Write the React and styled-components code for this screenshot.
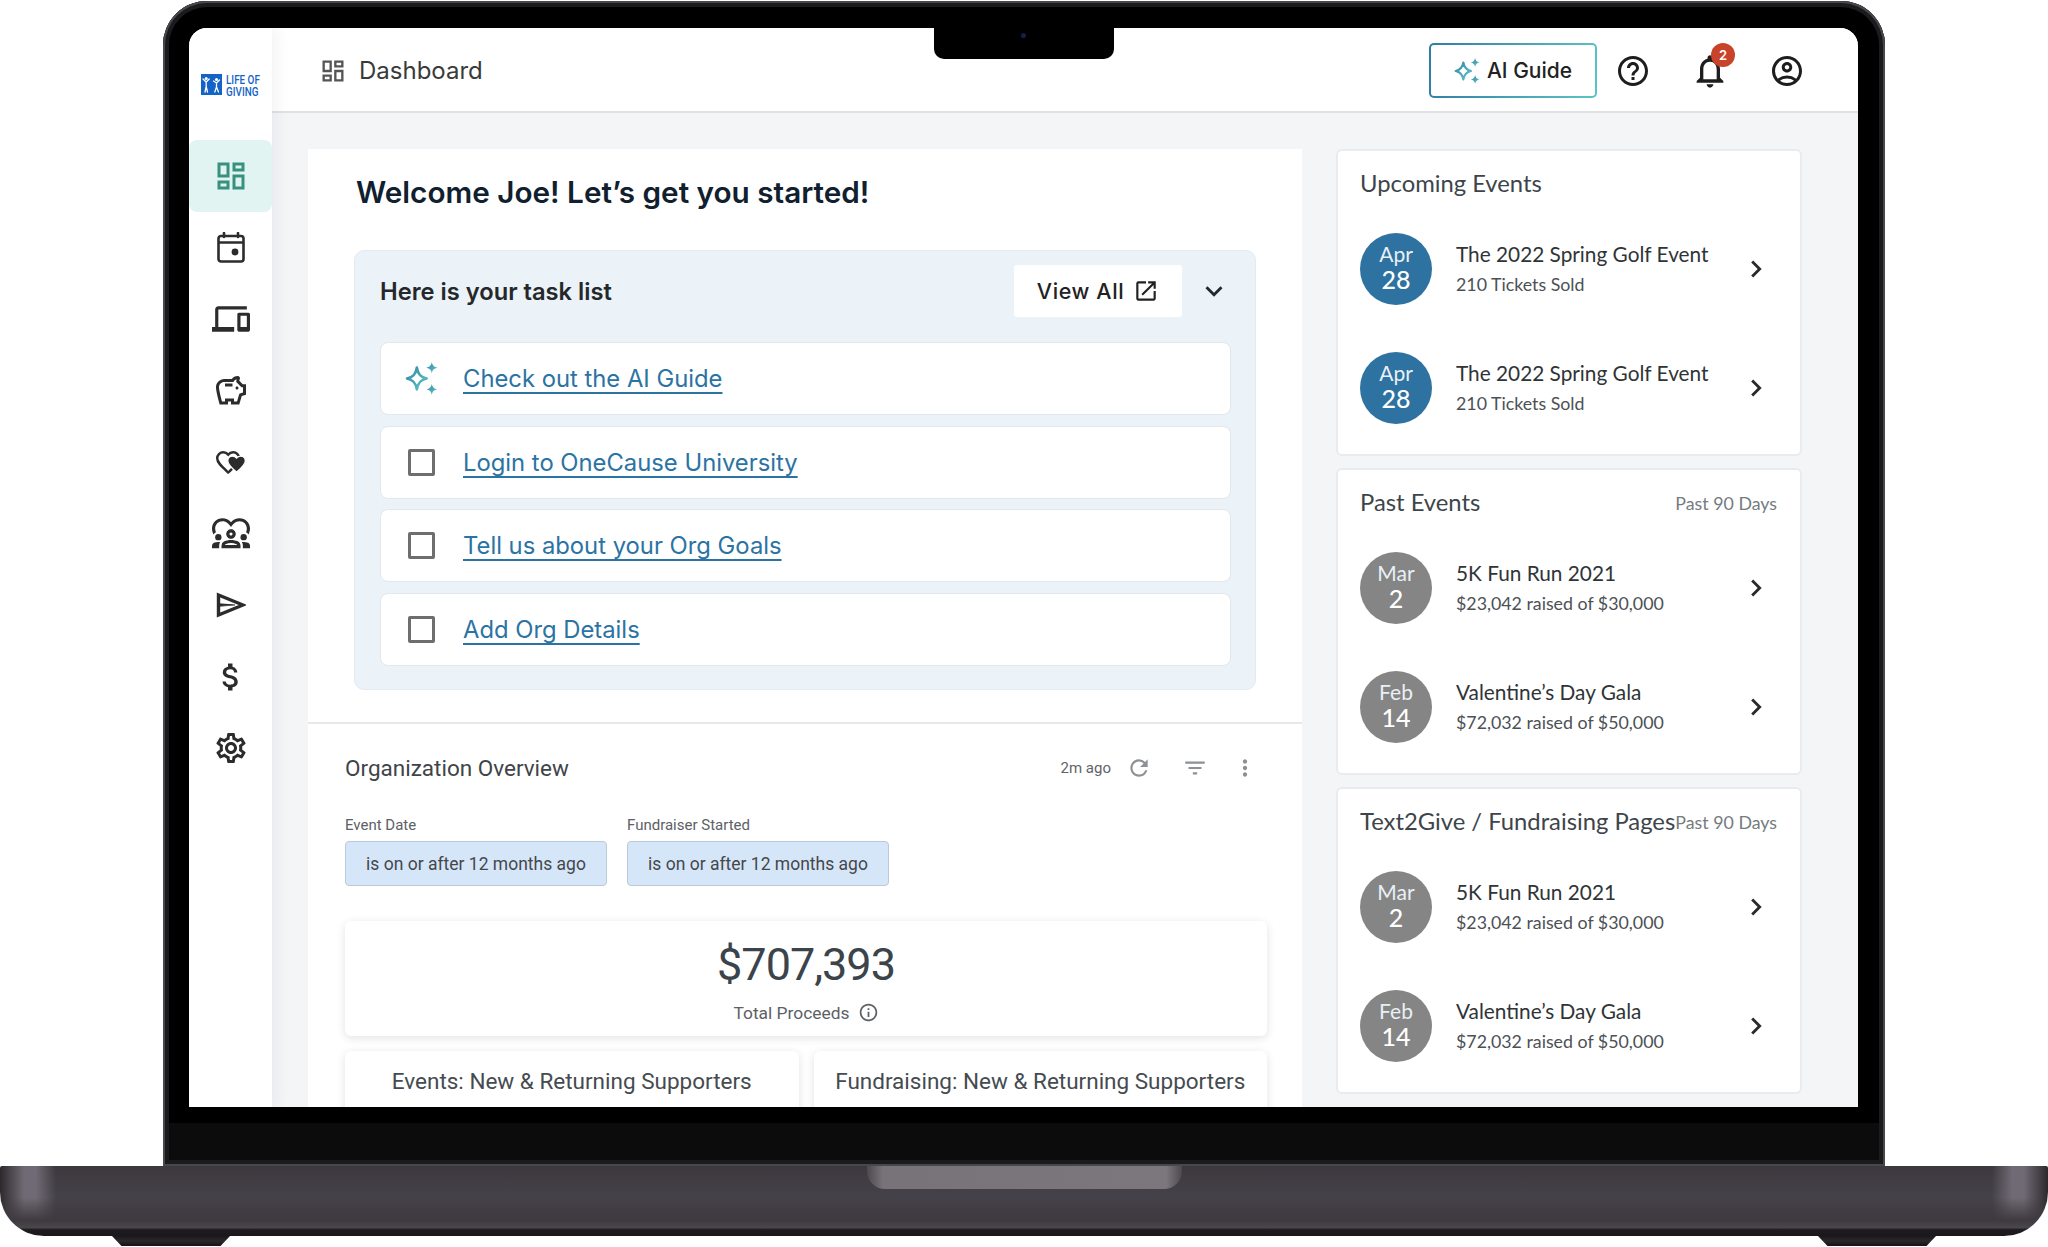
import React from 'react'
import styled, { createGlobalStyle } from 'styled-components'
import {
  MdOutlineDashboard,
  MdOutlineDevices,
  MdOutlineSavings,
  MdOutlineDiversity1,
  MdAttachMoney,
  MdOutlineSettings,
  MdHelpOutline,
  MdOutlineNotifications,
  MdOutlineAccountCircle,
  MdFilterList,
  MdMoreVert,
  MdRefresh,
  MdInfoOutline,
  MdOpenInNew,
  MdChevronRight,
  MdKeyboardArrowDown,
} from 'react-icons/md'

const GlobalStyle = createGlobalStyle`
  html, body {
    margin: 0;
    padding: 0;
    background: #fff;
    font-family: "Inter", "Liberation Sans", sans-serif;
  }
  * { box-sizing: border-box; }
`

const Page = styled.div`
  width: 2048px;
  height: 1247px;
  overflow: hidden;
  padding-top: 1px;
  display: flex;
  flex-direction: column;
  align-items: center;
  background: #fff;
`

const Lid = styled.div`
  width: 1722px;
  height: 1165px;
  padding: 27px 27px 59px 26px;
  border-radius: 44px 44px 0 0;
  background: linear-gradient(to bottom, #000 0, #000 1122px, #0c0c0c 1122px, #0c0c0c 100%);
  box-shadow: inset 0 0 0 2px #47474c, inset 0 0 0 6px #1b1b1e;
`

const Screen = styled.div`
  position: relative;
  width: 1669px;
  height: 1079px;
  overflow: hidden;
  display: flex;
  border-radius: 18px 18px 0 0;
  background: #f3f5f7;
`

const Notch = styled.div`
  position: absolute;
  top: 0;
  left: 50%;
  z-index: 3;
  width: 180px;
  height: 31px;
  margin-left: -90px;
  border-radius: 0 0 10px 10px;
  background: #000;
  display: flex;
  justify-content: center;
  padding-top: 5px;
`

const Camera = styled.div`
  width: 5px;
  height: 5px;
  border-radius: 50%;
  background: #15204a;
`

const Base = styled.div`
  width: 2048px;
  height: 70px;
  flex: none;
  display: flex;
  justify-content: center;
  border-radius: 2px 2px 44px 44px;
  background:
    linear-gradient(to bottom, rgba(62, 58, 64, 0) 45%, #3e3a40 78%, #4a464c 88%, #1e1c20 91%, #1a181c 100%),
    linear-gradient(to right, #2c292d 0, #6f6a73 24px, #6f6a73 36px, rgba(70, 65, 72, 0) 56px, rgba(70, 65, 72, 0) 1992px, #6f6a73 2012px, #6f6a73 2024px, #2c292d 2048px),
    linear-gradient(to bottom, #3c383e 0, #46424a 45%, #3e3a40 100%);
`

const Thumb = styled.div`
  width: 315px;
  height: 23px;
  border-radius: 0 0 18px 18px;
  background: linear-gradient(to right, #4d494f 0, #787379 5%, #7c777d 95%, #4d494f 100%);
`

const Feet = styled.div`
  width: 2048px;
  height: 10px;
  flex: none;
  display: flex;
  justify-content: space-between;
  padding: 0 112px;
`

const Foot = styled.div`
  width: 118px;
  height: 10px;
  background: linear-gradient(to bottom, #1a181b, #2a282b 50%, #141315);
  clip-path: polygon(0 0, 100% 0, 92% 100%, 8% 100%);
`

const Sidebar = styled.aside`
  position: relative;
  z-index: 1;
  width: 83px;
  flex: none;
  background: #fff;
  box-shadow: 4px 0 14px rgba(30, 40, 60, 0.06);
`

const LogoWrap = styled.div`
  height: 112px;
  padding: 46px 0 0 12px;
  display: flex;
  align-items: flex-start;
  gap: 4px;
`

const LogoText = styled.div`
  color: #1463c7;
  font-family: "Roboto", "Liberation Sans", sans-serif;
  font-weight: 500;
  font-size: 13px;
  line-height: 11.5px;
  transform: scaleX(0.76);
  transform-origin: left top;
  white-space: nowrap;
`

const NavItem = styled.div`
  height: ${(p) => (p.$active ? '72px' : '71.5px')};
  display: flex;
  align-items: center;
  justify-content: center;
  border-radius: ${(p) => (p.$active ? '8px' : '0')};
  background: ${(p) => (p.$active ? '#e1f4f1' : 'transparent')};
  color: ${(p) => (p.$active ? '#38917f' : '#2c2c2c')};
`

const Content = styled.div`
  flex: 1;
  min-width: 0;
  display: flex;
  flex-direction: column;
`

const Header = styled.header`
  height: 85px;
  flex: none;
  display: flex;
  align-items: center;
  justify-content: space-between;
  padding: 2px 53px 0 47px;
  background: #fff;
  border-bottom: 2px solid #dfe1e4;
`

const PageTitle = styled.div`
  display: flex;
  align-items: center;
  gap: 12px;
  color: #3a3a3a;
  font-size: 24px;
  line-height: 30px;
`

const TopActions = styled.div`
  display: flex;
  align-items: center;
`

const GuideButton = styled.button`
  width: 168px;
  height: 55px;
  margin-right: 18px;
  display: flex;
  align-items: center;
  justify-content: center;
  gap: 7px;
  border: 2px solid transparent;
  border-radius: 5px;
  background:
    linear-gradient(#fff, #fff) padding-box,
    linear-gradient(100deg, #2f7ea5, #5cc4c4) border-box;
  color: #222;
  font-family: "Inter", sans-serif;
  font-size: 21px;
  font-weight: 500;
`

const TopIcon = styled.div`
  position: relative;
  width: 36px;
  height: 36px;
  margin-left: ${(p) => (p.$gap ? `${p.$gap}px` : '0')};
  color: #1e1e1e;
  display: flex;
  align-items: center;
  justify-content: center;
  svg { flex: none; }
`

const Badge = styled.span`
  position: absolute;
  top: -10px;
  right: -7px;
  width: 24px;
  height: 24px;
  border-radius: 50%;
  background: #c8432a;
  color: #fff;
  font-size: 13px;
  font-weight: 600;
  display: flex;
  align-items: center;
  justify-content: center;
`

const Main = styled.main`
  flex: 1;
  min-height: 0;
  display: flex;
  gap: 34px;
  padding: 36px 56px 0 36px;
`

const LeftCard = styled.section`
  width: 994px;
  flex: none;
  background: #fff;
`

const StartBlock = styled.div`
  padding: 0 46px 32px;
  border-bottom: 2px solid #e8e8e8;
`

const Welcome = styled.h1`
  margin: 0;
  height: 101px;
  padding: 23px 0 0 2px;
  color: #10202e;
  font-size: 29.7px;
  line-height: 40px;
  font-weight: 600;
`

const TaskPanel = styled.div`
  height: 440px;
  padding: 14px 24px 0 25px;
  border-radius: 10px;
  border: 1px solid #e4eaf1;
  background: #ebf2f8;
`

const TaskHead = styled.div`
  height: 52px;
  margin-bottom: 25px;
  display: flex;
  align-items: center;
  color: #25282b;
`

const TaskTitle = styled.div`
  flex: 1;
  font-size: 23.7px;
  font-weight: 600;
`

const ViewAll = styled.button`
  width: 168px;
  height: 52px;
  display: flex;
  align-items: center;
  justify-content: center;
  gap: 9px;
  border: none;
  border-radius: 3px;
  background: #fff;
  color: #222;
  font-family: "Inter", sans-serif;
  font-size: 21.5px;
  font-weight: 500;
  letter-spacing: 0.6px;
`

const Collapse = styled.div`
  width: 49px;
  padding-left: 15px;
  display: flex;
`

const TaskList = styled.div`
  display: flex;
  flex-direction: column;
  gap: 10.7px;
`

const TaskRow = styled.div`
  height: 73px;
  padding-left: 27px;
  display: flex;
  align-items: center;
  gap: 28px;
  border-radius: 8px;
  border: 1px solid #e3e7ec;
  background: #fff;
`

const IconSlot = styled.div`
  width: 27px;
  flex: none;
  display: flex;
  justify-content: center;
`

const Checkbox = styled.span`
  display: block;
  width: 27px;
  height: 27px;
  border: 3px solid #6e6e6e;
  border-radius: 2px;
`

const TaskLink = styled.a`
  color: #2b73a3;
  font-size: 23.8px;
  text-decoration: underline;
  text-decoration-thickness: 2px;
  text-underline-offset: 5px;
  text-decoration-skip-ink: none;
`

const Overview = styled.div`
  padding: 0 35px 0 37px;
  font-family: "Roboto", "Liberation Sans", sans-serif;
`

const OverviewHead = styled.div`
  height: 88px;
  display: flex;
  align-items: center;
  justify-content: space-between;
`

const OverviewTitle = styled.div`
  color: #3f4448;
  font-size: 22.5px;
`

const OverviewTools = styled.div`
  display: flex;
  align-items: center;
  gap: 14px;
  padding-right: 9px;
  color: #8d9195;
`

const Ago = styled.span`
  color: #5f6468;
  font-size: 15px;
  margin-right: 1px;
`

const ToolIcon = styled.span`
  width: 26px;
  height: 26px;
  margin-left: ${(p) => (p.$gap ? `${p.$gap}px` : '0')};
  display: flex;
`

const Filters = styled.div`
  display: flex;
  gap: 20px;
  margin-bottom: 35px;
`

const Filter = styled.div`
  display: flex;
  flex-direction: column;
  gap: 6px;
  padding-top: 3px;
`

const FilterLabel = styled.label`
  color: #5c6166;
  font-size: 15px;
  line-height: 20px;
  height: 20px;
`

const Chip = styled.div`
  width: 262px;
  height: 45px;
  display: flex;
  align-items: center;
  justify-content: center;
  border-radius: 4px;
  border: 1px solid #bcc9d8;
  background: #d6e6f9;
  color: #44484c;
  font-size: 17.5px;
`

const Tile = styled.div`
  border-radius: 6px;
  background: #fff;
  box-shadow: 0 2px 9px rgba(40, 50, 60, 0.14);
`

const TotalTile = styled(Tile)`
  height: 115px;
  margin-bottom: 15px;
  padding-top: 14px;
  text-align: center;
`

const Amount = styled.div`
  color: #3b444b;
  font-size: 45px;
  letter-spacing: -1px;
  line-height: 60px;
`

const AmountLabel = styled.div`
  margin-top: 7px;
  display: flex;
  align-items: center;
  justify-content: center;
  gap: 8px;
  color: #5c6166;
  font-size: 17.4px;
`

const TileRow = styled.div`
  display: grid;
  grid-template-columns: 1fr 1fr;
  gap: 15px;
`

const HalfTile = styled(Tile)`
  height: 110px;
  padding-top: 16px;
  text-align: center;
  color: #454b50;
  font-size: 22.5px;
  line-height: 28px;
`

const RightColumn = styled.section`
  width: 466px;
  flex: none;
  display: flex;
  flex-direction: column;
  gap: 12px;
  font-family: "Lato", "Liberation Sans", sans-serif;
`

const EventCard = styled.div`
  height: 307px;
  flex: none;
  border: 2px solid #e9ebee;
  border-radius: 6px;
  background: #fff;
`

const EventHead = styled.div`
  height: 58px;
  padding: 16px 23px 0 22px;
  display: flex;
  justify-content: space-between;
  white-space: nowrap;
`

const EventHeading = styled.h2`
  margin: 0;
  color: #3d454b;
  font-size: 23.8px;
  line-height: 32px;
  font-weight: 400;
`

const Period = styled.span`
  color: #757b80;
  font-size: 17.8px;
  line-height: 34px;
`

const EventRow = styled.div`
  height: 119px;
  padding: 0 27px 0 22px;
  display: flex;
  align-items: center;
  gap: 24px;
`

const DateBadge = styled.div`
  width: 72px;
  height: 72px;
  flex: none;
  padding-top: 8px;
  border-radius: 50%;
  background: ${(p) => (p.$past ? '#858585' : '#2e72a1')};
  color: #fff;
  text-align: center;
`

const Month = styled.div`
  font-size: 21px;
  line-height: 26px;
  color: #e8f0f5;
`

const Day = styled.div`
  font-size: 25px;
  line-height: 24px;
  font-weight: 500;
`

const EventInfo = styled.div`
  flex: 1;
  min-width: 0;
  white-space: nowrap;
`

const EventName = styled.div`
  color: #2f3437;
  font-size: 20.8px;
  line-height: 30px;
`

const EventSub = styled.div`
  color: #4c5155;
  font-size: 17.8px;
  line-height: 30px;
`

const Arrow = styled.div`
  display: flex;
  color: #2a2a2a;
`

const SparkleSvg = styled.svg`
  flex: none;
`

const Sparkle = ({ id, size }) => (
  <SparkleSvg width={size} height={size} viewBox="0 0 32 32" fill="none">
    <defs>
      <linearGradient id={id} x1="0" y1="0" x2="1" y2="1">
        <stop offset="0" stopColor="#3586a5" />
        <stop offset="1" stopColor="#5ec7c6" />
      </linearGradient>
    </defs>
    <path d="M11.5 5.5c1.1 6.3 3.5 9.3 9.5 10.500-6 1.200-8.400 4.200-9.500 10.500C10.400 20.200 8 17.200 2 16c6-1.200 8.400-4.200 9.500-10.500z" stroke={`url(#${id})`} strokeWidth="2.6" strokeLinejoin="round" />
    <path d="M26 0c.6 3.400 2 4.700 5.500 5.500-3.500.8-4.900 2.100-5.500 5.500-.6-3.400-2-4.700-5.500-5.500C24 4.700 25.400 3.400 26 0z" fill={`url(#${id})`} />
    <path d="M26 21c.6 3.400 2 4.700 5.500 5.500-3.500.8-4.900 2.100-5.500 5.500-.6-3.400-2-4.700-5.500-5.500 3.500-.8 4.900-2.100 5.500-5.500z" fill={`url(#${id})`} />
  </SparkleSvg>
)

const LogoMark = () => (
  <svg width="21" height="21" viewBox="0 0 21 21">
    <rect width="21" height="21" fill="#1463c7" />
    <g stroke="#fff" strokeWidth="1.3" fill="none" strokeLinecap="round">
      <path d="M2 5l3.200 3 3-3M5.200 8v4.500M5.200 12.500L4 18M5.200 12.500L6.500 18" />
      <path d="M12.500 7l3 2 3-3M15.500 9v4M15.500 13L13.800 18M15.500 13L17.500 18" />
    </g>
    <circle cx="5.2" cy="4.4" r="1.5" fill="#fff" />
    <circle cx="15.5" cy="5.4" r="1.5" fill="#fff" />
  </svg>
)

const CalendarIcon = () => (
  <svg width="28" height="31" viewBox="0 0 28 31" fill="none">
    <path d="M7 1v4M21 1v4" stroke="currentColor" strokeWidth="2.6" strokeLinecap="round" />
    <rect x="1.5" y="4" width="25" height="25.5" rx="2.5" stroke="currentColor" strokeWidth="2.6" />
    <path d="M1.5 10.5h25" stroke="currentColor" strokeWidth="2.6" />
    <circle cx="18" cy="20" r="3.4" fill="currentColor" />
  </svg>
)

const HEART = 'M12 21.350l-1.450-1.320C5.400 15.360 2 12.280 2 8.500 2 5.420 4.420 3 7.500 3c1.740 0 3.410.81 4.500 2.090C13.090 3.810 14.760 3 16.500 3 19.580 3 22 5.420 22 8.500c0 3.780-3.400 6.860-8.550 11.540L12 21.350z'

const HeartsIcon = () => (
  <svg width="32" height="26" viewBox="0 0 32 26" fill="none">
    <path d={HEART} transform="scale(1.1)" stroke="currentColor" strokeWidth="2.2" />
    <path d={HEART} transform="translate(11 4.5) scale(0.88)" fill="currentColor" stroke="#fff" strokeWidth="1.6" />
  </svg>
)

const SendIcon = () => (
  <svg width="30" height="26" viewBox="0 0 30 26" fill="none">
    <path d="M2.500 3L27 13 2.500 23z" stroke="currentColor" strokeWidth="3.4" strokeLinejoin="miter" />
    <path d="M2 11.800L19 13 2 14.200z" fill="currentColor" stroke="currentColor" strokeWidth="1.2" />
  </svg>
)

const navIcons = [
  <MdOutlineDashboard size={36} />,
  <CalendarIcon />,
  <MdOutlineDevices size={38} />,
  <MdOutlineSavings size={36} />,
  <HeartsIcon />,
  <MdOutlineDiversity1 size={38} />,
  <SendIcon />,
  <MdAttachMoney size={36} />,
  <MdOutlineSettings size={36} />,
]

const tasks = ['Login to OneCause University', 'Tell us about your Org Goals', 'Add Org Details']

const upcoming = [
  { month: 'Apr', day: '28', name: 'The 2022 Spring Golf Event', sub: '210 Tickets Sold' },
  { month: 'Apr', day: '28', name: 'The 2022 Spring Golf Event', sub: '210 Tickets Sold' },
]

const past = [
  { month: 'Mar', day: '2', name: '5K Fun Run 2021', sub: '$23,042 raised of $30,000' },
  { month: 'Feb', day: '14', name: "Valentine\u2019s Day Gala", sub: '$72,032 raised of $50,000' },
]

const EventList = ({ title, period, items, isPast }) => (
  <EventCard>
    <EventHead>
      <EventHeading>{title}</EventHeading>
      {period && <Period>{period}</Period>}
    </EventHead>
    {items.map((item, i) => (
      <EventRow key={i}>
        <DateBadge $past={isPast}>
          <Month>{item.month}</Month>
          <Day>{item.day}</Day>
        </DateBadge>
        <EventInfo>
          <EventName>{item.name}</EventName>
          <EventSub>{item.sub}</EventSub>
        </EventInfo>
        <Arrow>
          <MdChevronRight size={34} />
        </Arrow>
      </EventRow>
    ))}
  </EventCard>
)

const App = () => {
  return (
    <Page>
      <GlobalStyle />
      <Lid>
        <Screen>
          <Notch>
            <Camera />
          </Notch>
          <Sidebar>
            <LogoWrap>
              <LogoMark />
              <LogoText>
                LIFE OF
                <br />
                GIVING
              </LogoText>
            </LogoWrap>
            {navIcons.map((icon, i) => (
              <NavItem key={i} $active={i === 0}>
                {icon}
              </NavItem>
            ))}
          </Sidebar>
          <Content>
            <Header>
              <PageTitle>
                <MdOutlineDashboard size={28} color="#555" />
                Dashboard
              </PageTitle>
              <TopActions>
                <GuideButton>
                  <Sparkle id="spark-top" size={26} />
                  AI Guide
                </GuideButton>
                <TopIcon>
                  <MdHelpOutline size={36} />
                </TopIcon>
                <TopIcon $gap={41}>
                  <MdOutlineNotifications size={40} />
                  <Badge>2</Badge>
                </TopIcon>
                <TopIcon $gap={41}>
                  <MdOutlineAccountCircle size={36} />
                </TopIcon>
              </TopActions>
            </Header>
            <Main>
              <LeftCard>
                <StartBlock>
                  <Welcome>Welcome Joe! Let’s get you started!</Welcome>
                  <TaskPanel>
                    <TaskHead>
                      <TaskTitle>Here is your task list</TaskTitle>
                      <ViewAll>
                        View All
                        <MdOpenInNew size={26} />
                      </ViewAll>
                      <Collapse>
                        <MdKeyboardArrowDown size={34} />
                      </Collapse>
                    </TaskHead>
                    <TaskList>
                      <TaskRow>
                        <IconSlot>
                          <Sparkle id="spark-task" size={33} />
                        </IconSlot>
                        <TaskLink>Check out the AI Guide</TaskLink>
                      </TaskRow>
                      {tasks.map((t) => (
                        <TaskRow key={t}>
                          <IconSlot>
                            <Checkbox />
                          </IconSlot>
                          <TaskLink>{t}</TaskLink>
                        </TaskRow>
                      ))}
                    </TaskList>
                  </TaskPanel>
                </StartBlock>
                <Overview>
                  <OverviewHead>
                    <OverviewTitle>Organization Overview</OverviewTitle>
                    <OverviewTools>
                      <Ago>2m ago</Ago>
                      <ToolIcon>
                        <MdRefresh size={26} />
                      </ToolIcon>
                      <ToolIcon $gap={16}>
                        <MdFilterList size={26} />
                      </ToolIcon>
                      <ToolIcon $gap={10}>
                        <MdMoreVert size={26} />
                      </ToolIcon>
                    </OverviewTools>
                  </OverviewHead>
                  <Filters>
                    <Filter>
                      <FilterLabel>Event Date</FilterLabel>
                      <Chip>is on or after 12 months ago</Chip>
                    </Filter>
                    <Filter>
                      <FilterLabel>Fundraiser Started</FilterLabel>
                      <Chip>is on or after 12 months ago</Chip>
                    </Filter>
                  </Filters>
                  <TotalTile>
                    <Amount>$707,393</Amount>
                    <AmountLabel>
                      Total Proceeds
                      <MdInfoOutline size={21} />
                    </AmountLabel>
                  </TotalTile>
                  <TileRow>
                    <HalfTile>Events: New &amp; Returning Supporters</HalfTile>
                    <HalfTile>Fundraising: New &amp; Returning Supporters</HalfTile>
                  </TileRow>
                </Overview>
              </LeftCard>
              <RightColumn>
                <EventList title="Upcoming Events" items={upcoming} />
                <EventList title="Past Events" period="Past 90 Days" items={past} isPast />
                <EventList title="Text2Give / Fundraising Pages" period="Past 90 Days" items={past} isPast />
              </RightColumn>
            </Main>
          </Content>
        </Screen>
      </Lid>
      <Base>
        <Thumb />
      </Base>
      <Feet>
        <Foot />
        <Foot />
      </Feet>
    </Page>
  )
}

export default App
